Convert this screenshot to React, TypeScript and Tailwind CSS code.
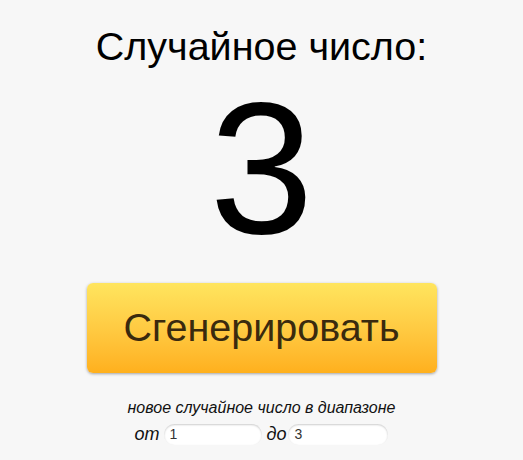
import React, { useState } from "react";

const App: React.FC = () => {
  const [from, setFrom] = useState("1");
  const [to, setTo] = useState("3");
  const [value, setValue] = useState(3);

  const generate = () => {
    const a = parseInt(from, 10) || 0;
    const b = parseInt(to, 10) || 0;
    const lo = Math.min(a, b);
    const hi = Math.max(a, b);
    setValue(lo + Math.floor(Math.random() * (hi - lo + 1)));
  };

  return (
    <div className="w-[523px] h-[460px] bg-[#f7f7f7] flex flex-col items-center text-black font-['Liberation_Sans',Arial,sans-serif] overflow-hidden">
      <h1 className="mt-[24px] text-[39.5px] leading-[44px]">Случайное число:</h1>
      <div className="mt-[10px] text-[187px] leading-[182px] h-[182px]">{value}</div>
      <button
        onClick={generate}
        className="mt-[23px] w-[350px] h-[90px] rounded-[6px] bg-gradient-to-b from-[#ffe55e] to-[#ffb01c] shadow-[0_1px_3px_rgba(0,0,0,0.35)] text-[39.5px] text-[#3a2a0e] flex items-center justify-center"
      >
        Сгенерировать
      </button>
      <p className="mt-[25px] text-[16px] leading-[20px] italic text-[#111]">
        новое случайное число в диапазоне
      </p>
      <div className="mt-[3px] flex items-center text-[18px] italic text-[#111]">
        <span className="mr-[4px]">от</span>
        <input
          value={from}
          onChange={(e) => setFrom(e.target.value)}
          className="w-[98px] h-[21px] rounded-full bg-white px-[6px] text-[14px] not-italic text-[#333] shadow-[inset_0_1px_2px_rgba(0,0,0,0.2)] outline-none"
        />
        <span className="ml-[5px] mr-[2px]">до</span>
        <input
          value={to}
          onChange={(e) => setTo(e.target.value)}
          className="w-[100px] h-[21px] rounded-full bg-white px-[6px] text-[14px] not-italic text-[#333] shadow-[inset_0_1px_2px_rgba(0,0,0,0.2)] outline-none"
        />
      </div>
    </div>
  );
};

export default App;
